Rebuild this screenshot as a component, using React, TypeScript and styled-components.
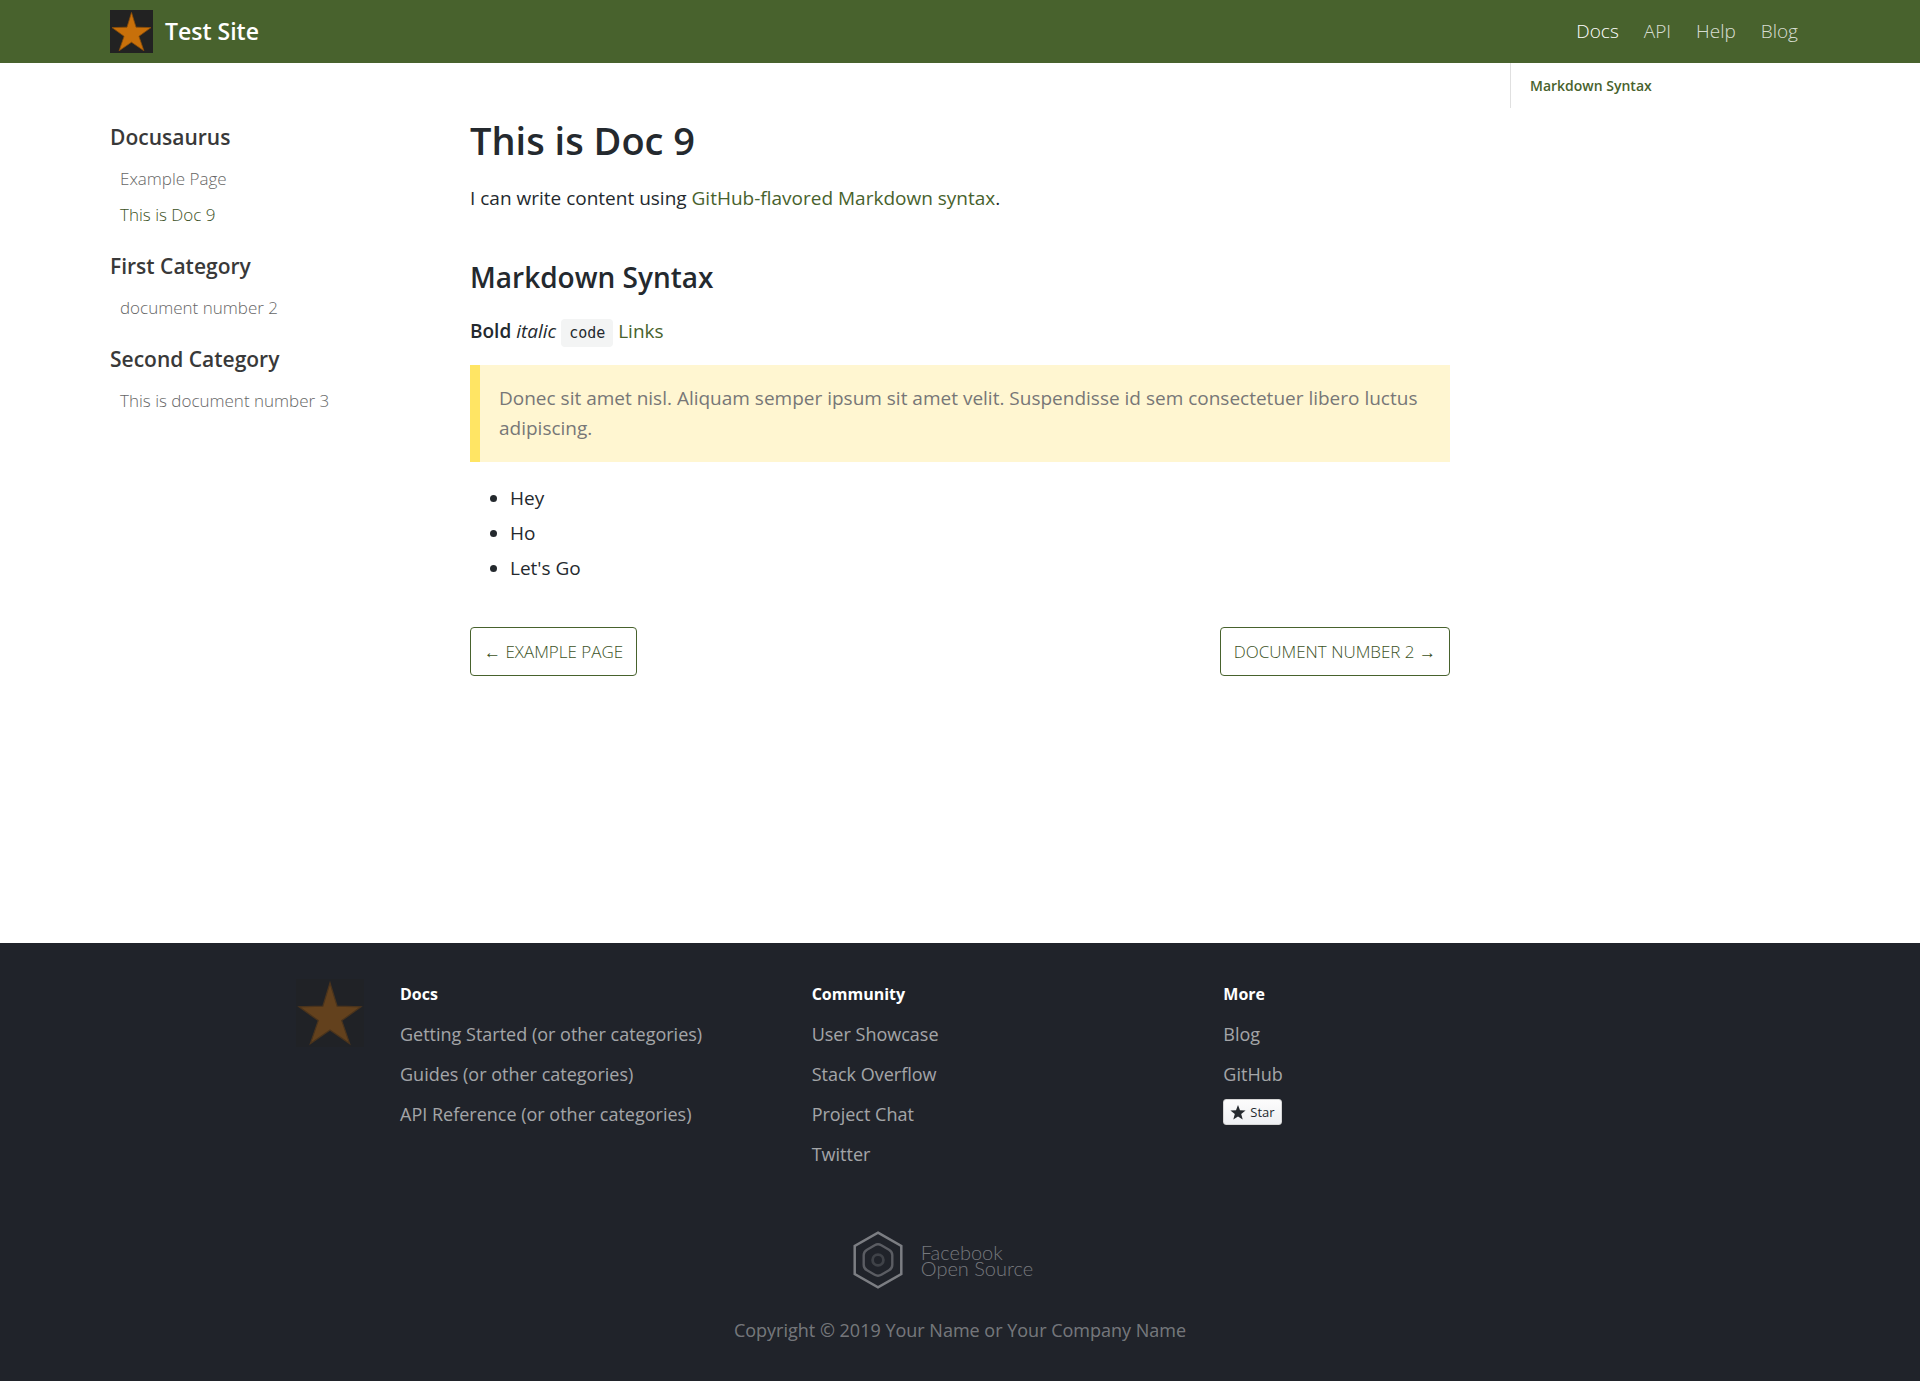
import React from "react";
import styled, { createGlobalStyle } from "styled-components";

const color = {
  primary: "#48622d",
  text: "#24292e",
  footer: "#20232a",
};

const GlobalStyle = createGlobalStyle`
  *, *::before, *::after { box-sizing: border-box; }
  body {
    margin: 0;
    background: #fff;
    color: ${color.text};
    font-family: "Segoe UI", "Open Sans", "Noto Sans", sans-serif;
    font-size: 19px;
    line-height: 30px;
  }
  a { color: ${color.primary}; text-decoration: none; }
  h1, h2, h3, h4, p, ul { margin: 0; }
`;

const Page = styled.div`
  display: flex;
  flex-direction: column;
  min-height: 100vh;
`;

const Header = styled.header`
  background: ${color.primary};
  padding: 10px 20px;
`;

const HeaderInner = styled.div`
  display: flex;
  align-items: center;
  justify-content: space-between;
  max-width: 1700px;
  margin: 0 auto;
`;

const Brand = styled.a`
  display: flex;
  align-items: center;
  gap: 12px;
  color: #fff;
`;

const BrandName = styled.h2`
  font-size: 23px;
  font-weight: 600;
  line-height: 43px;
`;

const NavList = styled.ul`
  display: flex;
  gap: 25px;
  padding: 0 12px 2px 0;
  list-style: none;
`;

const NavLink = styled.a<{ $active?: boolean }>`
  color: ${(p) => (p.$active ? "#fff" : "rgba(255, 255, 255, 0.8)")};
  font-weight: 300;
`;

const Body = styled.div`
  flex: 1;
  padding: 0 20px;
`;

const Columns = styled.div`
  display: grid;
  grid-template-columns: 300px minmax(0, 1fr) 300px;
  column-gap: 60px;
  align-items: start;
  max-width: 1700px;
  margin: 0 auto;
`;

const Sidebar = styled.nav`
  padding-top: 56px;
`;

const SideGroup = styled.section`
  margin-bottom: 15px;
`;

const SideTitle = styled.h3`
  color: #393939;
  font-size: 21px;
  font-weight: 600;
  line-height: 36px;
`;

const SideList = styled.ul`
  padding: 6px 0 0 10px;
  list-style: none;
`;

const SideLink = styled.a<{ $active?: boolean }>`
  display: block;
  color: ${(p) => (p.$active ? "#3c5225" : "#666")};
  font-size: 17px;
  font-weight: 300;
  line-height: 36px;
`;

const Main = styled.main`
  padding: 49px 0 100px;
`;

const Title = styled.h1`
  font-size: 38px;
  font-weight: 600;
  line-height: 56px;
`;

const Heading = styled.h2`
  margin-top: 40px;
  font-size: 28px;
  font-weight: 600;
  line-height: 48px;
`;

const Text = styled.p`
  margin-top: 15px;
`;

const Strong = styled.strong`
  font-weight: 600;
`;

const Code = styled.code`
  padding: 5px 8px;
  border-radius: 4px;
  background: #f3f4f4;
  font-family: Consolas, "DejaVu Sans Mono", monospace;
  font-size: 15px;
`;

const Quote = styled.blockquote`
  margin: 17px 0 0;
  padding: 18px 28px 19px 19px;
  border-left: 10px solid #ffe564;
  background: #fff6d1;
  color: #777;
`;

const Bullets = styled.ul`
  margin-top: 21px;
  padding-left: 40px;

  li + li { margin-top: 5px; }
`;

const Pager = styled.nav`
  display: flex;
  justify-content: space-between;
  margin-top: 44px;
`;

const PagerLink = styled.a`
  padding: 0 13px;
  border: 1px solid ${color.primary};
  border-radius: 4px;
  color: #3c5225;
  font-size: 17px;
  font-weight: 300;
  line-height: 47px;
  text-transform: uppercase;
`;

const Toc = styled.nav`
  padding: 8px 0 7px 19px;
  border-left: 1px solid #e0e0e0;
`;

const TocLink = styled.a`
  display: block;
  font-size: 14px;
  font-weight: 600;
`;

const Footer = styled.footer`
  padding: 36px 20px 36px;
  background: ${color.footer};
  font-size: 18px;
`;

const Sitemap = styled.section`
  display: flex;
  max-width: 1350px;
  margin: 0 auto 62px;
`;

const FooterLogo = styled.a`
  flex: 0 0 115px;
  padding-left: 11px;
  opacity: 0.4;
`;

const FooterColumn = styled.div`
  display: flex;
  flex: 1;
  flex-direction: column;
  align-items: flex-start;
  gap: 10px;
`;

const FooterTitle = styled.h5`
  margin: 0;
  color: #fff;
  font-size: 16px;
  font-weight: 700;
`;

const FooterLink = styled.a`
  color: rgba(255, 255, 255, 0.6);
`;

const StarButton = styled.button`
  display: flex;
  align-items: center;
  gap: 4px;
  height: 26px;
  padding: 0 6px;
  border: 1px solid #d5d5d5;
  border-radius: 3px;
  background: linear-gradient(#fcfcfc, #eef0f3);
  color: ${color.text};
  font-family: inherit;
  font-size: 13px;
  font-weight: 500;
`;

const OpenSource = styled.a`
  display: flex;
  align-items: center;
  justify-content: center;
  gap: 18px;
  margin-bottom: 26px;
  padding-right: 34px;
  color: #76787d;
  font-family: Lato, sans-serif;
  font-size: 20px;
  font-weight: 300;
  line-height: 16px;
  white-space: nowrap;
`;

const Copyright = styled.p`
  color: rgba(255, 255, 255, 0.4);
  text-align: center;
`;

function StarLogo({ size }: { size: number }) {
  return (
    <svg width={size} height={size} viewBox="0 0 43 43" role="img" aria-label="Test Site" display="block">
      <rect width="43" height="43" fill="#222" />
      <path
        d="M21.5 2.500 26 17.200 41 17.600 28.900 26.300 33.900 40.800 21.5 32.200 9.100 40.800 14.100 26.300 2 17.600 17 17.200Z"
        fill="#c8700a"
        stroke="#8a4d08"
        strokeWidth="0.8"
      />
    </svg>
  );
}

function OpenSourceMark() {
  return (
    <svg width="50" height="58" viewBox="0 0 50 58" fill="none" aria-hidden="true">
      <path d="M25 1.6 48.3 15v28L25 56.4 1.700 43V15Z" stroke="#7c7e83" strokeWidth="2.500" />
      <path
        d="M21.700 14.200q3.300-1.900 6.600 0L36 18.700q3.300 1.900 3.300 5.600v9.400q0 3.700-3.300 5.600l-7.700 4.500q-3.300 1.900-6.600 0L14 39.300q-3.300-1.900-3.300-5.600v-9.400q0-3.700 3.300-5.600Z"
        stroke="#5b5d63"
        strokeWidth="2.400"
      />
      <circle cx="25" cy="29" r="5.400" stroke="#3f4248" strokeWidth="2.800" />
    </svg>
  );
}

const navItems = ["Docs", "API", "Help", "Blog"];

const sidebar = [
  { title: "Docusaurus", pages: ["Example Page", "This is Doc 9"] },
  { title: "First Category", pages: ["document number 2"] },
  { title: "Second Category", pages: ["This is document number 3"] },
];

const footerColumns = [
  {
    title: "Docs",
    links: [
      "Getting Started (or other categories)",
      "Guides (or other categories)",
      "API Reference (or other categories)",
    ],
  },
  { title: "Community", links: ["User Showcase", "Stack Overflow", "Project Chat", "Twitter"] },
  { title: "More", links: ["Blog", "GitHub"], star: true },
];

export default function App() {
  return (
    <Page>
      <GlobalStyle />
      <Header>
        <HeaderInner>
          <Brand href="#">
            <StarLogo size={43} />
            <BrandName>Test Site</BrandName>
          </Brand>
          <nav aria-label="Main">
            <NavList>
              {navItems.map((item) => (
                <li key={item}>
                  <NavLink href="#" $active={item === "Docs"}>{item}</NavLink>
                </li>
              ))}
            </NavList>
          </nav>
        </HeaderInner>
      </Header>

      <Body>
        <Columns>
          <Sidebar aria-label="Documents">
            {sidebar.map((group) => (
              <SideGroup key={group.title}>
                <SideTitle>{group.title}</SideTitle>
                <SideList>
                  {group.pages.map((page) => (
                    <li key={page}>
                      <SideLink href="#" $active={page === "This is Doc 9"}>{page}</SideLink>
                    </li>
                  ))}
                </SideList>
              </SideGroup>
            ))}
          </Sidebar>

          <Main>
            <Title>This is Doc 9</Title>
            <Text>
              I can write content using <a href="#">GitHub-flavored Markdown syntax</a>.
            </Text>
            <Heading id="markdown-syntax">Markdown Syntax</Heading>
            <Text>
              <Strong>Bold</Strong> <em>italic</em> <Code>code</Code> <a href="#">Links</a>
            </Text>
            <Quote>
              Donec sit amet nisl. Aliquam semper ipsum sit amet velit. Suspendisse id sem
              consectetuer libero luctus adipiscing.
            </Quote>
            <Bullets>
              <li>Hey</li>
              <li>Ho</li>
              <li>Let's Go</li>
            </Bullets>
            <Pager aria-label="Pages">
              <PagerLink href="#">← Example Page</PagerLink>
              <PagerLink href="#">document number 2 →</PagerLink>
            </Pager>
          </Main>

          <Toc aria-label="On this page">
            <TocLink href="#markdown-syntax">Markdown Syntax</TocLink>
          </Toc>
        </Columns>
      </Body>

      <Footer>
        <Sitemap>
          <FooterLogo href="#">
            <StarLogo size={68} />
          </FooterLogo>
          {footerColumns.map((column) => (
            <FooterColumn key={column.title}>
              <FooterTitle>{column.title}</FooterTitle>
              {column.links.map((link) => (
                <FooterLink key={link} href="#">{link}</FooterLink>
              ))}
              {column.star && (
                <StarButton type="button">
                  <svg width="16" height="15" viewBox="0 0 16 15" fill="#24292e" aria-hidden="true">
                    <path d="M8 0 10 5.300 15.600 5.500 11.200 9 12.700 14.500 8 11.400 3.300 14.500 4.800 9 .4 5.500 6 5.300Z" />
                  </svg>
                  Star
                </StarButton>
              )}
            </FooterColumn>
          ))}
        </Sitemap>
        <OpenSource href="#">
          <OpenSourceMark />
          <span>
            Facebook
            <br />
            Open Source
          </span>
        </OpenSource>
        <Copyright>Copyright © 2019 Your Name or Your Company Name</Copyright>
      </Footer>
    </Page>
  );
}
